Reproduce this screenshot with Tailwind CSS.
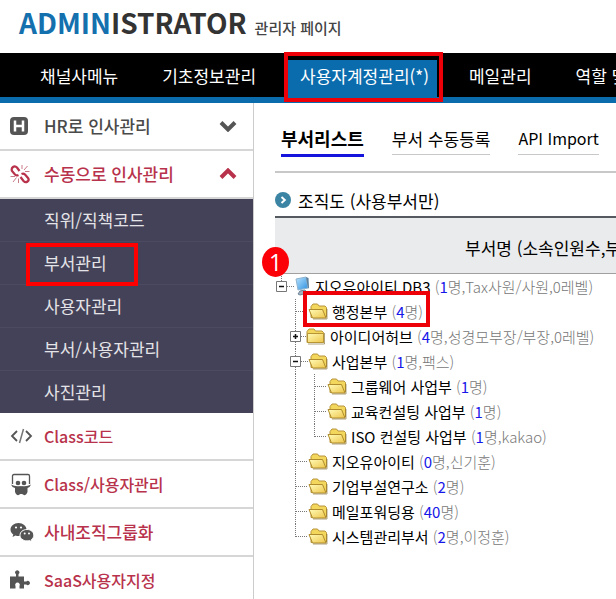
<!DOCTYPE html>
<html lang="ko">
<head>
  <meta charset="UTF-8" />
  <meta name="viewport" content="width=device-width, initial-scale=1.0"/>
  <title>관리자 페이지</title>
  <script src="https://cdn.jsdelivr.net/npm/@tailwindcss/browser@4"></script>
</head>
<body class="bg-white min-h-screen flex flex-col overflow-x-hidden font-['Noto_Sans_CJK_KR',sans-serif] text-[17px] text-[#222]">

  <!-- shared icons -->
  <svg class="absolute w-0 h-0" aria-hidden="true">
    <defs>
      <linearGradient id="gold" x1="0" y1="0" x2="1" y2="1">
        <stop offset="0" stop-color="#fffbb8"/><stop offset="1" stop-color="#eec64a"/>
      </linearGradient>
      <linearGradient id="screen" x1="0" y1="0" x2="1" y2="1">
        <stop offset="0" stop-color="#b9e4ff"/><stop offset="1" stop-color="#2c8fe0"/>
      </linearGradient>
    </defs>
    <symbol id="folder-open" viewBox="0 0 20 18">
      <path d="M3 15.5V4.5L5 2h4.5l1.5 2h6l1.500 1.500V15z" fill="#f3d65c" stroke="#b8943a"/>
      <path d="M1 7.500h13.500l3.500 8.500H4.500z" fill="url(#gold)" stroke="#b08c2c"/>
      <path d="M5 17h14V7" fill="none" stroke="#7d6525" stroke-opacity=".6"/>
    </symbol>
    <symbol id="folder" viewBox="0 0 20 18">
      <path d="M1 15.500V4.500L3 2h5l1.500 2H16l1.500 1.500v10z" fill="#f3d65c" stroke="#b8943a"/>
      <path d="M1.500 6.500h16v9h-16z" fill="url(#gold)" stroke="#b89534"/>
      <path d="M2 17h16.500V6" fill="none" stroke="#7d6525" stroke-opacity=".6"/>
    </symbol>
    <symbol id="tee" viewBox="0 0 19 25">
      <path d="M6.500 0v25M7 12.500h12" fill="none" stroke="#777" stroke-dasharray="1 1"/>
    </symbol>
    <symbol id="elbow" viewBox="0 0 19 25">
      <path d="M6.500 0v13M7 12.500h12" fill="none" stroke="#777" stroke-dasharray="1 1"/>
    </symbol>
    <symbol id="pipe" viewBox="0 0 19 25">
      <path d="M6.500 0v25" fill="none" stroke="#777" stroke-dasharray="1 1"/>
    </symbol>
    <symbol id="minus" viewBox="0 0 19 25">
      <path d="M6.500 0v25M12 12.500h7" fill="none" stroke="#777" stroke-dasharray="1 1"/>
      <path d="M1.500 7.500h10v10h-10z" fill="#fff" stroke="#777"/>
      <path d="M4 12.500h5" stroke="#111" stroke-width="1.500"/>
    </symbol>
    <symbol id="root" viewBox="0 0 19 25">
      <path d="M6.500 0v7M12 12.500h7" fill="none" stroke="#777" stroke-dasharray="1 1"/>
      <path d="M1.500 7.500h10v10h-10z" fill="#fff" stroke="#777"/>
      <path d="M4 12.500h5" stroke="#111" stroke-width="1.500"/>
    </symbol>
    <symbol id="plus" viewBox="0 0 19 25">
      <path d="M6.500 0v25M12 12.500h7" fill="none" stroke="#777" stroke-dasharray="1 1"/>
      <path d="M1.500 7.500h10v10h-10z" fill="#fff" stroke="#777"/>
      <path d="M4 12.500h5M6.500 10v5" stroke="#111" stroke-width="1.500"/>
    </symbol>
  </svg>

  <header class="h-[53px] flex items-baseline gap-2 pl-[19px] whitespace-nowrap">
    <h1 class="text-[28px] leading-[44px] font-bold text-[#333]"><span class="text-[#1570ae]">ADMIN</span>ISTRATOR</h1>
    <p class="text-[15px] font-medium text-[#444]">관리자 페이지</p>
  </header>

  <nav class="bg-black border-b-6 border-[#0b6cad] text-white">
    <ul class="flex gap-5 pl-7 h-[44px] items-end whitespace-nowrap leading-[31px]">
      <li><a href="#" class="block px-3 pb-[6px]">채널사메뉴</a></li>
      <li><a href="#" class="block px-3 pb-[6px]">기초정보관리</a></li>
      <li class="relative">
        <a href="#" class="block pl-3 pr-2 bg-[#0b6cad] pb-[6px]">사용자계정관리(*)</a>
        <span class="absolute -top-2 -left-1 -right-[6px] -bottom-[5px] border-4 border-[#ee0008]"></span>
      </li>
      <li><a href="#" class="block px-3 pb-[6px]">메일관리</a></li>
      <li><a href="#" class="block px-3 pb-[6px]">역할 및</a></li>
    </ul>
  </nav>

  <div class="flex flex-1">
    <aside class="w-[254px] shrink-0 border-r border-[#ccc] font-medium text-[#b8324b]">
      <a href="#" class="flex items-center h-12 border-b-2 border-[#d6d6d6] pl-[10px] pr-4 text-[#4a4a4a]">
        <svg class="w-[18px] h-[18px] mr-4" viewBox="0 0 18 18"><rect width="18" height="18" rx="4" fill="#555"/><path d="M5 3.500v11M13 3.500v11M5 9h8" stroke="#fff" stroke-width="2.500"/></svg>
        <span>HR로 인사관리</span>
        <svg class="w-[18px] h-3 ml-auto" viewBox="0 0 18 12"><path d="M2 2.500l7 7 7-7" fill="none" stroke="#555" stroke-width="4"/></svg>
      </a>
      <a href="#" class="flex items-center h-12 border-b-2 border-[#d6d6d6] pl-[10px] pr-4">
        <svg class="w-5 h-5 mr-[14px]" viewBox="0 0 20 20" fill="none" stroke="#b8324b"><path d="M9.500 7L7 3.500Q5 1.500 3 3T2 7l3 3.500Q6.500 12 8.500 11M10.500 13l3 4q2 2 4 .500t.500-3.500L15 10.500Q13.500 9 11.500 10" stroke-width="2.200"/><path d="M12 1v4M14 6l3.500-4M15 7.500h4.500M8.500 14.500V19M6.500 13.500L3 18M5 12.500H.500" stroke-width="1" stroke="#c97a88"/></svg>
        <span>수동으로 인사관리</span>
        <svg class="w-[18px] h-3 ml-auto" viewBox="0 0 18 12"><path d="M2 9.500l7-7 7 7" fill="none" stroke="#b8324b" stroke-width="4"/></svg>
      </a>
      <ul class="bg-[#444258] text-[#e4e4e8] font-normal leading-[42px]">
        <li class="border-b border-[#4c4a60]"><a href="#" class="block pl-11">직위/직책코드</a></li>
        <li class="relative border-b border-[#4c4a60]">
          <a href="#" class="block pl-11">부서관리</a>
          <span class="absolute left-[26px] top-px w-[112px] h-[43px] border-4 border-[#ff0000]"></span>
        </li>
        <li class="border-b border-[#4c4a60]"><a href="#" class="block pl-11">사용자관리</a></li>
        <li class="border-b border-[#4c4a60]"><a href="#" class="block pl-11">부서/사용자관리</a></li>
        <li><a href="#" class="block pl-11">사진관리</a></li>
      </ul>
      <a href="#" class="flex items-center h-12 border-b-2 border-[#d6d6d6] pl-[10px]">
        <svg class="w-6 h-5 mr-[10px]" viewBox="0 0 24 20" fill="none" stroke="#555" stroke-width="1.800"><path d="M7 5l-5 5 5 5M16 5l5 5-5 5"/><path d="M13.500 3l-4 14" stroke="#777" stroke-width="1.500"/></svg>
        <span class="text-base">Class코드</span>
      </a>
      <a href="#" class="flex items-center h-12 border-b-2 border-[#d6d6d6] pl-[10px]">
        <svg class="w-6 h-6 mr-[10px]" viewBox="0 0 24 24" fill="#555"><path d="M2.500 12V4q0-1.500 1.500-1.500h14q1.500 0 1.500 1.500v8" fill="none" stroke="#555" stroke-width="1.300"/><circle cx="8" cy="11" r="2.300"/><circle cx="14" cy="11" r="2.300"/><path d="M1 12.500q4 2.500 9.500 1.500.5.800 1 0 5.500 1 9.500-1.500-1 3-3.500 3.500.5 4-1 6t-3.500.5l-1-.5h-1.500l-1 .5q-2 1.500-3.500-.5T5 16Q2 15.500 1 12.500z"/></svg>
        <span class="text-base">Class/사용자관리</span>
      </a>
      <a href="#" class="flex items-center h-12 border-b-2 border-[#d6d6d6] pl-[10px]">
        <svg class="w-6 h-5 mr-[10px]" viewBox="0 0 24 20"><path d="M8.500 1C4 1 .5 4 .5 7.500c0 2 1 3.700 2.800 4.900L2.500 15l3-1.500q1.500.5 3 .5c4.500 0 8-3 8-6.500S13 1 8.500 1z" fill="#555"/><path d="M17 7.500c-4 0-7 2.500-7 5.700s3 5.700 7 5.700q1.300 0 2.500-.4l2.500 1.300-.6-2.200c1.500-1.100 2.400-2.600 2.400-4.400 0-3.200-2.800-5.700-6.800-5.700z" fill="#555" stroke="#fff"/><g fill="#fff"><circle cx="6" cy="5.500" r="1.100"/><circle cx="11" cy="5.500" r="1.100"/><circle cx="14.700" cy="11.500" r="1"/><circle cx="19" cy="11.500" r="1"/></g></svg>
        <span>사내조직그룹화</span>
      </a>
      <a href="#" class="flex items-center h-[42px] pl-[10px] pt-1">
        <svg class="w-5 h-5 mr-[14px]" viewBox="0 0 20 20" fill="#555"><path d="M0 6.500h6V4.200a2.100 2.100 0 1 1 2.500 0v2.300H14v5h2.300a2.100 2.100 0 1 1 0 3H14V18.500H9.500V16a2.300 2.300 0 1 0-4 0v2.500H0z"/></svg>
        <span class="text-base">SaaS사용자지정</span>
      </a>
    </aside>

    <main class="flex-1 min-w-0 overflow-x-clip pl-[21px]">
      <div class="flex items-start gap-7 pl-[6px] pt-5 pb-[14px] border-b-2 border-[#c8c8c8] whitespace-nowrap text-black leading-[31px]">
        <a href="#" class="border-b-3 border-[#1414dc] text-lg leading-[31px] font-bold">부서리스트</a>
        <a href="#" class="border-b border-[#c8c8c8]">부서 수동등록</a>
        <a href="#" class="border-b border-[#c8c8c8] text-base leading-[31px]">API Import</a>
      </div>

      <h2 class="flex items-center gap-[7px] pt-4 pb-[3px] leading-[24px] text-black">
        <svg class="w-4 h-4 -mt-0.5" viewBox="0 0 16 16"><circle cx="8" cy="8" r="8" fill="#3b84a3"/><path d="M6.500 5l3.300 3-3.300 3" fill="none" stroke="#fff" stroke-width="2"/></svg>
        조직도 (사용부서만)
      </h2>

      <table class="w-full border-collapse">
        <thead>
          <tr>
            <th class="h-14 bg-[#e9ebec] border-t-2 border-t-[#555a60] border-b border-b-[#a0a0a0] p-0 pt-1 pl-[190px] max-w-0 text-left font-normal text-black whitespace-nowrap relative">
              부서명 (소속인원수,부
              <span class="absolute -left-[13px] top-[29px] w-[27px] h-[30px] rounded-[50%] bg-[#fb0007] text-white text-[23px] leading-[30px] text-center font-['Open_Sans',sans-serif]">1</span>
            </th>
          </tr>
        </thead>
        <tbody>
          <tr>
            <td class="p-0 max-w-0">
              <ul class="text-[15px] leading-[25px] text-black whitespace-nowrap">
                <li class="flex items-center">
                  <button type="button" aria-label="접기"><svg class="w-[19px] h-[25px]"><use href="#root"/></svg></button>
                  <svg class="w-[17px] h-5 mr-1" viewBox="0 0 17 20"><path d="M2 3l10-2 2 11-10 2z" fill="url(#screen)" stroke="#8fb4cf"/><path d="M12 1l2.500 1L15 12l-1 .5z" fill="#5b7f9c"/><path d="M6 15l5-1 2 3-7 2-2-1z" fill="#9fb2c2" stroke="#6f8495"/></svg>
                  <span>지오유아이티 DB3 <span class="text-[#777] font-light">(<b class="font-normal text-[#1616e8]">1</b>명,Tax사원/사원,0레벨)</span></span>
                </li>
                <li class="relative flex items-center pl-[14px]">
                  <svg class="w-[19px] h-[25px]"><use href="#tee"/></svg>
                  <svg class="w-5 h-[18px] mr-1"><use href="#folder-open"/></svg>
                  <span>행정본부 <span class="text-[#777] font-light">(<b class="font-normal text-[#1616e8]">4</b>명)</span></span>
                  <span class="absolute left-7 -top-2 w-[127px] h-[36px] border-4 border-[#ee0008]"></span>
                </li>
                <li class="flex items-center pl-[14px]">
                  <button type="button" aria-label="펼치기"><svg class="w-[19px] h-[25px]"><use href="#plus"/></svg></button>
                  <svg class="w-5 h-[18px] mr-1 -ml-0.5"><use href="#folder"/></svg>
                  <span>아이디어허브 <span class="text-[#777] font-light">(<b class="font-normal text-[#1616e8]">4</b>명,성경모부장/부장,0레벨)</span></span>
                </li>
                <li class="flex items-center pl-[14px]">
                  <button type="button" aria-label="접기"><svg class="w-[19px] h-[25px]"><use href="#minus"/></svg></button>
                  <svg class="w-5 h-[18px] mr-1"><use href="#folder-open"/></svg>
                  <span>사업본부 <span class="text-[#777] font-light">(<b class="font-normal text-[#1616e8]">1</b>명,팩스)</span></span>
                </li>
                <li class="flex items-center pl-[14px]">
                  <svg class="w-[19px] h-[25px]"><use href="#pipe"/></svg>
                  <svg class="w-[19px] h-[25px]"><use href="#tee"/></svg>
                  <svg class="w-5 h-[18px] mr-1"><use href="#folder-open"/></svg>
                  <span>그룹웨어 사업부 <span class="text-[#777] font-light">(<b class="font-normal text-[#1616e8]">1</b>명)</span></span>
                </li>
                <li class="flex items-center pl-[14px]">
                  <svg class="w-[19px] h-[25px]"><use href="#pipe"/></svg>
                  <svg class="w-[19px] h-[25px]"><use href="#tee"/></svg>
                  <svg class="w-5 h-[18px] mr-1"><use href="#folder-open"/></svg>
                  <span>교육컨설팅 사업부 <span class="text-[#777] font-light">(<b class="font-normal text-[#1616e8]">1</b>명)</span></span>
                </li>
                <li class="flex items-center pl-[14px]">
                  <svg class="w-[19px] h-[25px]"><use href="#pipe"/></svg>
                  <svg class="w-[19px] h-[25px]"><use href="#elbow"/></svg>
                  <svg class="w-5 h-[18px] mr-1"><use href="#folder-open"/></svg>
                  <span>ISO 컨설팅 사업부 <span class="text-[#777] font-light">(<b class="font-normal text-[#1616e8]">1</b>명,kakao)</span></span>
                </li>
                <li class="flex items-center pl-[14px]">
                  <svg class="w-[19px] h-[25px]"><use href="#tee"/></svg>
                  <svg class="w-5 h-[18px] mr-1"><use href="#folder-open"/></svg>
                  <span>지오유아이티 <span class="text-[#777] font-light">(<b class="font-normal text-[#1616e8]">0</b>명,신기훈)</span></span>
                </li>
                <li class="flex items-center pl-[14px]">
                  <svg class="w-[19px] h-[25px]"><use href="#tee"/></svg>
                  <svg class="w-5 h-[18px] mr-1"><use href="#folder-open"/></svg>
                  <span>기업부설연구소 <span class="text-[#777] font-light">(<b class="font-normal text-[#1616e8]">2</b>명)</span></span>
                </li>
                <li class="flex items-center pl-[14px]">
                  <svg class="w-[19px] h-[25px]"><use href="#tee"/></svg>
                  <svg class="w-5 h-[18px] mr-1"><use href="#folder-open"/></svg>
                  <span>메일포워딩용 <span class="text-[#777] font-light">(<b class="font-normal text-[#1616e8]">40</b>명)</span></span>
                </li>
                <li class="flex items-center pl-[14px]">
                  <svg class="w-[19px] h-[25px]"><use href="#elbow"/></svg>
                  <svg class="w-5 h-[18px] mr-1"><use href="#folder-open"/></svg>
                  <span>시스템관리부서 <span class="text-[#777] font-light">(<b class="font-normal text-[#1616e8]">2</b>명,이정훈)</span></span>
                </li>
              </ul>
            </td>
          </tr>
        </tbody>
      </table>
    </main>
  </div>
</body>
</html>
